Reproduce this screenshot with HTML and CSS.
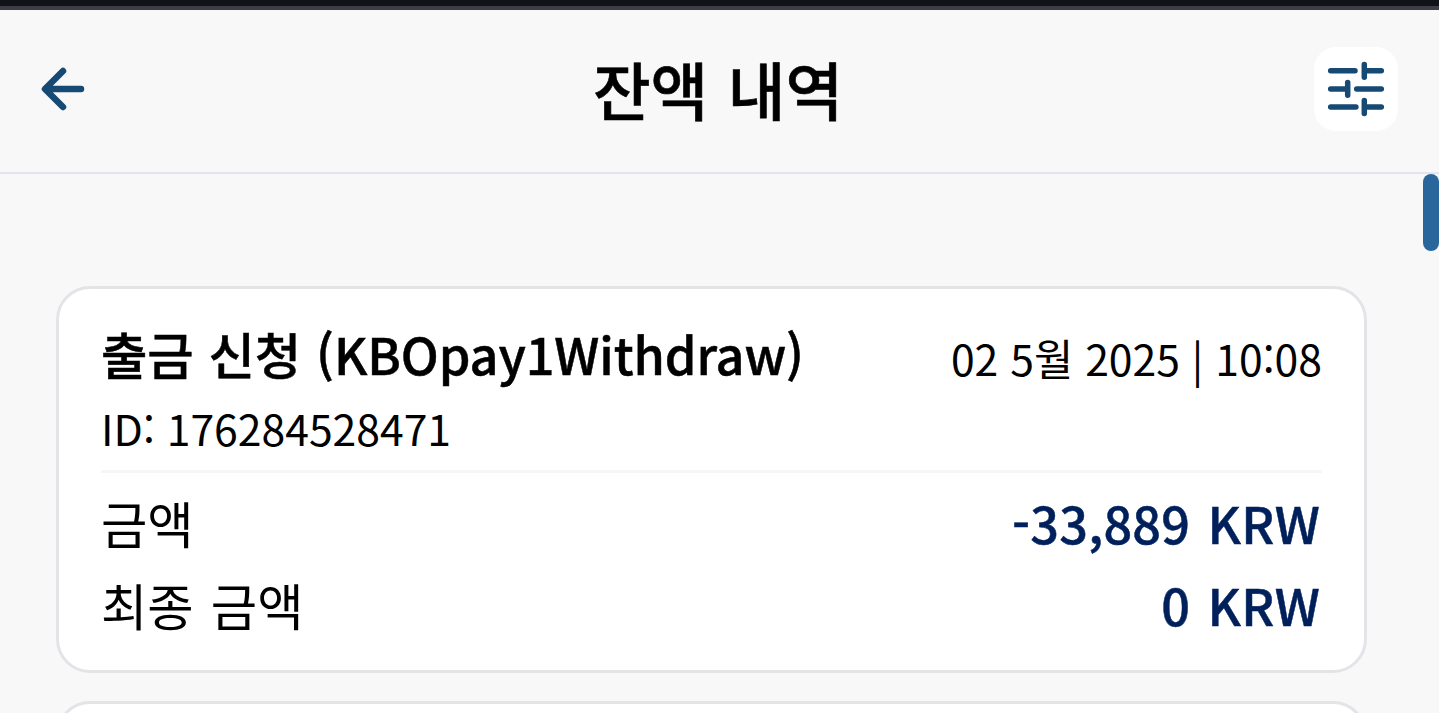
FILE: index.html
```html
<!DOCTYPE html>
<html lang="ko">
<head>
    <meta charset="UTF-8">
    <meta name="viewport" content="width=device-width, initial-scale=1.0">
    <title>잔액 내역</title>
    <link rel="stylesheet" href="styles.css">
</head>
<body>
    <div class="status-strip"></div>
    <header class="top-bar">
        <button class="back-button" aria-label="back">
            <svg width="48" height="48" viewBox="0 0 48 48" fill="none" stroke="#164a74" stroke-width="6.500" stroke-linecap="round" stroke-linejoin="round">
                <path d="M43 24H8M25 6L7 24L25 42"/>
            </svg>
        </button>
        <h1>잔액 내역</h1>
        <button class="filter-button" aria-label="filter">
            <svg width="58" height="56" viewBox="0 0 58 56" fill="none" stroke="#164a74" stroke-width="5.500" stroke-linecap="round">
                <path d="M3.700 9.700H28M37.300 3.400V16.300M37.300 9.700H54.300"/>
                <path d="M3.700 28H20.700M20.700 21.400V34.300M29.700 28H54.300"/>
                <path d="M3.700 46H28.900M37.300 39.400V52.600M37.300 46H54.300"/>
            </svg>
        </button>
    </header>
    <div class="scroll-thumb"></div>
    <main class="history-list">
        <section class="history-card">
            <div class="card-head">
                <div class="card-title">출금 신청 (KBOpay1Withdraw)</div>
                <div class="card-date">02 5월 2025 | 10:08</div>
            </div>
            <div class="card-id">ID: 176284528471</div>
            <div class="card-row">
                <span>금액</span>
                <span class="card-value">-33,889 KRW</span>
            </div>
            <div class="card-row">
                <span>최종 금액</span>
                <span class="card-value">0 KRW</span>
            </div>
        </section>
        <section class="history-card"></section>
    </main>
</body>
</html>
```

FILE: styles.css
```css
html, body {
    height: 100%;
}
body {
    margin: 0;
    height: 713px;
    overflow: hidden;
    position: relative;
    background-color: #f8f8f9;
    color: #000000;
    font-family: "Noto Sans CJK KR", "Noto Sans", sans-serif;
}
.status-strip {
    height: 6px;
    background-color: #111318;
    border-bottom: 4px solid #3c3e48;
}
.top-bar {
    height: 162px;
    border-bottom: 2px solid #e4e4ec;
    display: flex;
    align-items: center;
    justify-content: space-between;
    padding: 0 41px 0 38px;
}
.top-bar h1 {
    margin: 0 0 6px 0;
    font-size: 62.700px;
    font-weight: 500;
    line-height: 1;
    word-spacing: 2px;
    -webkit-text-stroke: 0.6px #000000;
}
.back-button {
    background: none;
    border: none;
    padding: 0;
    width: 84px;
    height: 48px;
    margin-bottom: 4px;
    display: flex;
}
.filter-button {
    width: 84px;
    height: 84px;
    border: none;
    border-radius: 22px;
    background-color: #ffffff;
    padding: 0;
    margin-bottom: 4px;
    display: flex;
    align-items: center;
    justify-content: center;
}
.scroll-thumb {
    position: absolute;
    top: 174px;
    right: 0;
    width: 16px;
    height: 77px;
    border-radius: 8px;
    background-color: #29669c;
}
.history-list {
    padding: 112px 72px 0 56px;
    display: flex;
    flex-direction: column;
    gap: 28px;
}
.history-card {
    background-color: #ffffff;
    border: 3px solid #e2e4e8;
    border-radius: 34px;
    padding: 29px 42px 24px 42px;
    min-height: 100px;
}
.card-head {
    display: flex;
    justify-content: space-between;
    align-items: flex-start;
}
.card-title {
    font-size: 50.400px;
    font-weight: 500;
    line-height: 72px;
    word-spacing: 1px;
    letter-spacing: -0.1px;
    -webkit-text-stroke: 0.5px #000000;
}
.card-date {
    font-size: 42.700px;
    line-height: 72px;
    margin: 3px 0 -3px 0;
}
.card-id {
    font-size: 42.700px;
    line-height: 74px;
    padding-bottom: 6px;
    border-bottom: 3px solid #f6f6f7;
    margin-bottom: 9px;
}
.card-row {
    display: flex;
    justify-content: space-between;
    font-size: 50.400px;
    line-height: 82px;
    word-spacing: 3px;
}
.card-value {
    color: #00205b;
    font-weight: 500;
    letter-spacing: 0.2px;
    margin-right: 2px;
    -webkit-text-stroke: 0.5px #00205b;
}
```
